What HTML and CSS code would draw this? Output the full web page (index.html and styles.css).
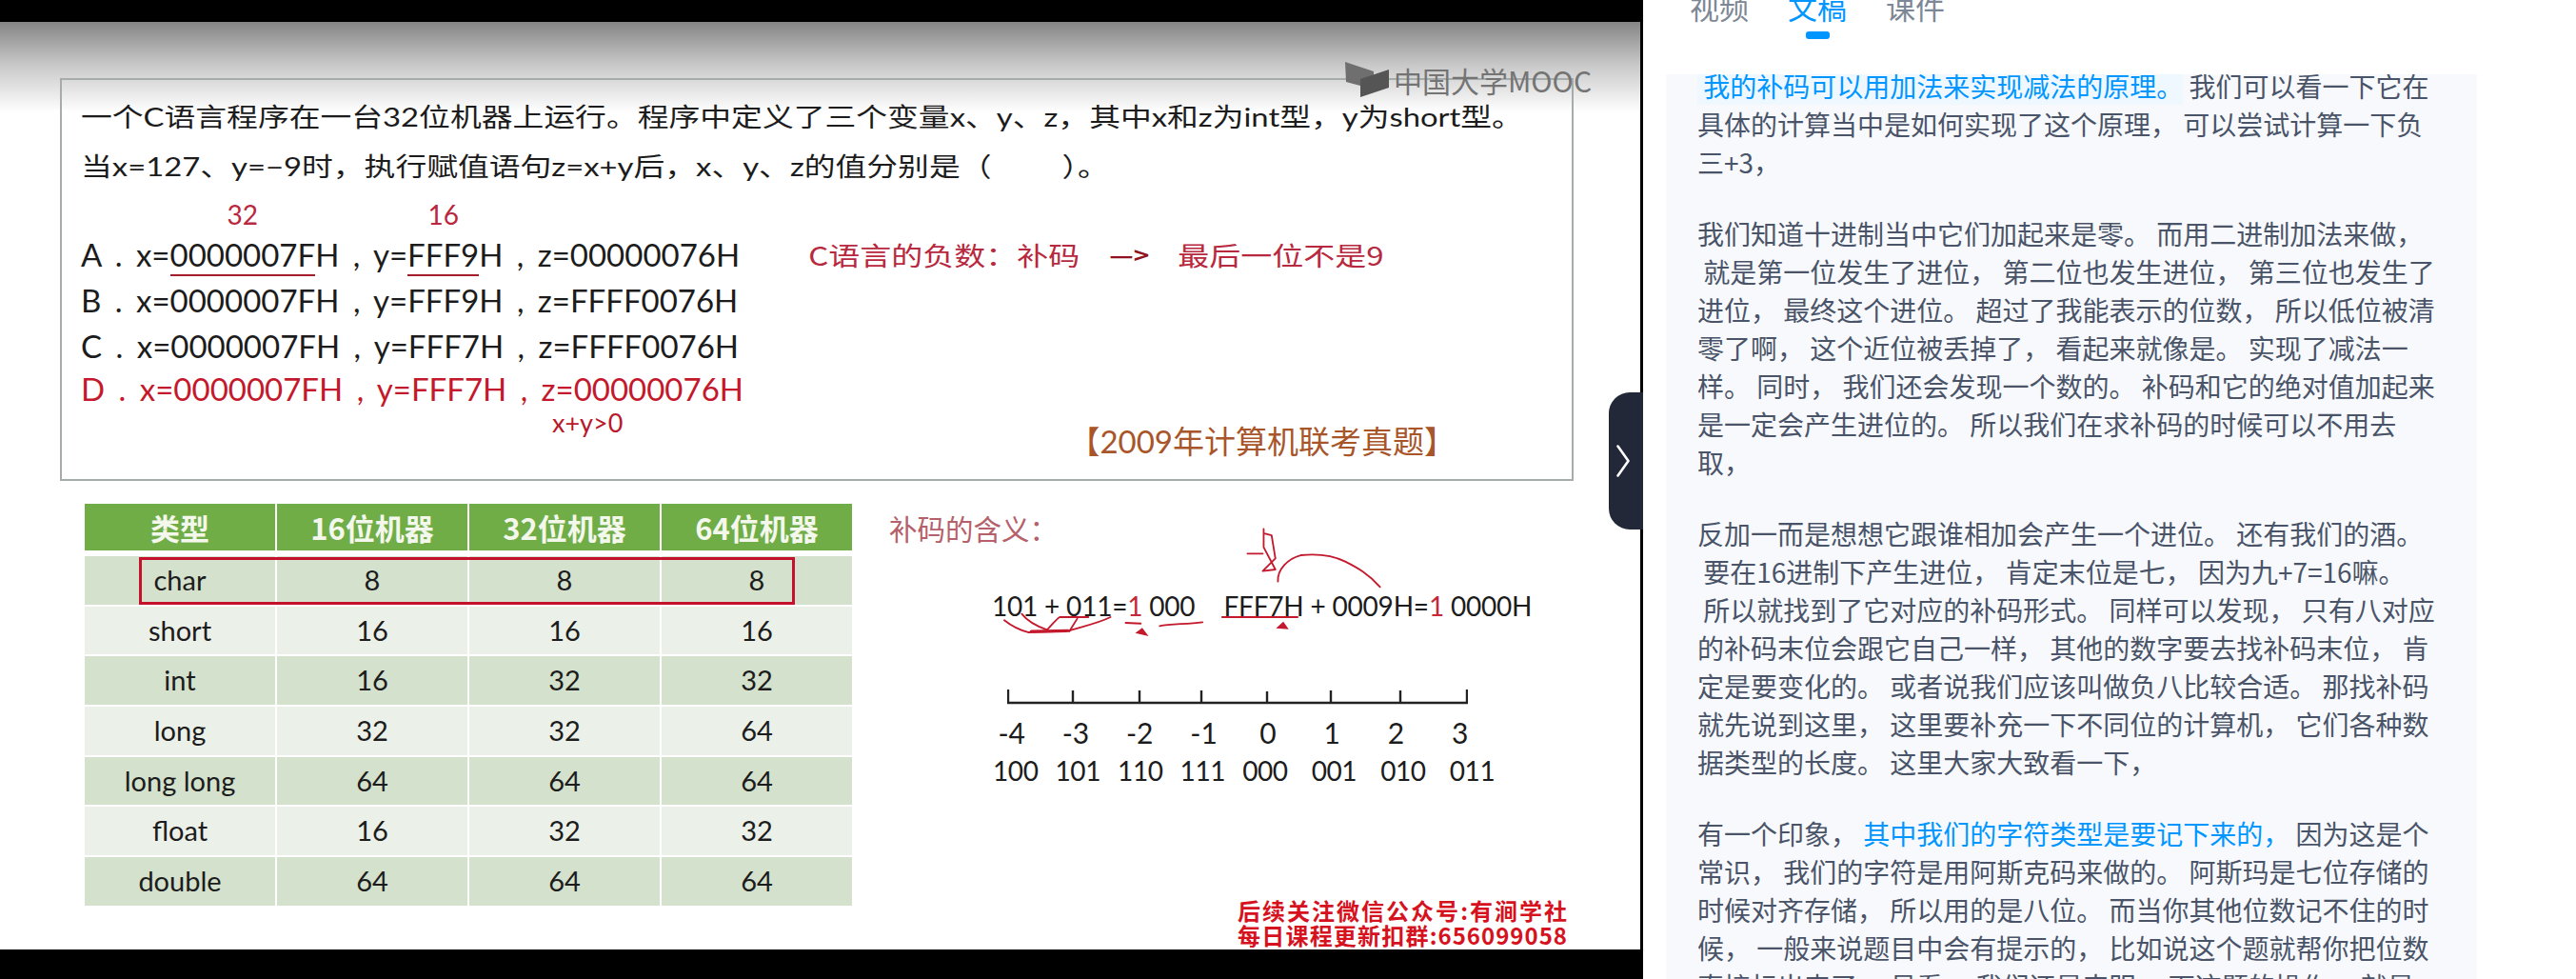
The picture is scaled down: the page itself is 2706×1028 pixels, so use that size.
FILE: index.html
```html
<!DOCTYPE html>
<html lang="zh-CN">
<head>
  <meta charset="UTF-8" />
  <title>补码 - 文稿</title>
  <link rel="stylesheet" href="styles.css">
</head>
<body>
  <div class="video">
    <div class="slide">
      <div class="question">
        <div class="q-line">一个C语言程序在一台32位机器上运行。程序中定义了三个变量x、y、z，其中x和z为int型，y为short型。</div>
        <div class="q-line">当x=127、y=−9时，执行赋值语句z=x+y后，x、y、z的值分别是（　　 ）。</div>
        <div class="options">
          <div class="opt opt-a">
            <span>A . x=<span class="mark mark-x">0000007F<i>32</i></span>H , y=<span class="mark mark-y">FFF9<i>16</i></span>H , z=00000076H</span>
            <span class="note">C语言的负数：补码<b>—&gt;</b>最后一位不是9</span>
          </div>
          <div class="opt">B . x=0000007FH , y=FFF9H , z=FFFF0076H</div>
          <div class="opt">C . x=0000007FH , y=FFF7H , z=FFFF0076H</div>
          <div class="opt opt-right">D . x=0000007FH , y=FFF7H , z=00000076H<span class="hint">x+y&gt;0</span></div>
        </div>
        <div class="source">【2009年计算机联考真题】</div>
      </div>

      <div class="lower">
        <div class="sizes">
          <div class="th">类型</div><div class="th">16位机器</div><div class="th">32位机器</div><div class="th">64位机器</div>
          <div class="td dark">char</div><div class="td dark">8</div><div class="td dark">8</div><div class="td dark">8</div>
          <div class="td">short</div><div class="td">16</div><div class="td">16</div><div class="td">16</div>
          <div class="td dark">int</div><div class="td dark">16</div><div class="td dark">32</div><div class="td dark">32</div>
          <div class="td">long</div><div class="td">32</div><div class="td">32</div><div class="td">64</div>
          <div class="td dark">long long</div><div class="td dark">64</div><div class="td dark">64</div><div class="td dark">64</div>
          <div class="td">float</div><div class="td">16</div><div class="td">32</div><div class="td">32</div>
          <div class="td dark">double</div><div class="td dark">64</div><div class="td dark">64</div><div class="td dark">64</div>
          <div class="char-box"></div>
        </div>

        <div class="meaning">
          <div class="m-title">补码的含义：</div>
          <div class="equations">
            <span>101 + 011=<em>1</em> 000</span>
            <span>FFF7H + 0009H=<em>1</em> 0000H</span>
          </div>
          <!-- handwriting over the sums -->
          <svg class="scribble" viewBox="0 0 1300 390" xmlns="http://www.w3.org/2000/svg">
            <g fill="none" stroke="#c4182c" stroke-width="5.5" stroke-linecap="round" stroke-linejoin="round">
              <path d="M75 310 C100 330 120 340 150 348 L270 345 C320 330 370 320 410 300"/>
              <path d="M130 290 C150 315 180 330 210 340 C230 320 240 305 250 300 L340 300 M305 305 L280 345"/>
              <path d="M160 345 L275 343" stroke-width="9"/>
              <path d="M458 318 L505 320" stroke-width="6"/>
              <path d="M565 328 C600 322 650 322 700 316"/>
              <path d="M762 300 L1000 300"/>
              <path d="M842 100 L890 100 M893 22 L893 80 L930 150 L890 155 L930 115 L918 42 L895 36"/>
              <path d="M938 188 C935 150 970 115 1010 105 C1060 100 1110 105 1150 125 C1190 145 1225 165 1260 205"/>
            </g>
            <path d="M488 350 L510 334 L530 360 Z M932 335 L955 314 L972 338 Z" fill="#c4182c"/>
          </svg>
          <svg class="axis" viewBox="0 0 484 16" xmlns="http://www.w3.org/2000/svg">
            <path d="M1 0 V14 H483 V0 M69 1 V14 M139 1 V14 M204 1 V14 M273 2 V14 M340 1 V14 M413 1 V14" fill="none" stroke="#222" stroke-width="2.4"/>
          </svg>
          <div class="ticks">
            <span>-4</span><span>-3</span><span>-2</span><span>-1</span><span>0</span><span>1</span><span>2</span><span>3</span>
          </div>
          <div class="bins">
            <span>100</span><span>101</span><span>110</span><span>111</span><span>000</span><span>001</span><span>010</span><span>011</span>
          </div>
          <div class="promo">后续关注微信公众号:有涧学社<br>每日课程更新扣群:656099058</div>
        </div>
      </div>
    </div>

    <div class="watermark">
      <svg viewBox="0 0 46 37" xmlns="http://www.w3.org/2000/svg">
        <path d="M0 0 L30 10 L30 29 L16 25 L1 21 Z" fill="#6f6f6f"/>
        <path d="M16 18 L46 8 L46 27 L16 37 Z" fill="#555"/>
      </svg>
      <span>中国大学MOOC</span>
    </div>

    <div class="toggle">
      <svg viewBox="0 0 14 34" xmlns="http://www.w3.org/2000/svg">
        <path d="M1.5 1.5 L12.5 17 L1.5 32.5" fill="none" stroke="#fff" stroke-width="2.6" stroke-linecap="round" stroke-linejoin="round"/>
      </svg>
    </div>
  </div>

  <div class="side">
    <div class="tabs">
      <div class="tab">视频</div>
      <div class="tab active">文稿</div>
      <div class="tab">课件</div>
    </div>
    <div class="doc">
<p class="para first"><span class="hl"> 我的补码可以用加法来实现减法的原理。</span> 我们可以看一下它在
具体的计算当中是如何实现了这个原理， 可以尝试计算一下负
三+3，</p>
<p class="para">我们知道十进制当中它们加起来是零。 而用二进制加法来做，
 就是第一位发生了进位， 第二位也发生进位， 第三位也发生了
进位， 最终这个进位。 超过了我能表示的位数， 所以低位被清
零了啊， 这个近位被丢掉了， 看起来就像是。 实现了减法一
样。 同时， 我们还会发现一个数的。 补码和它的绝对值加起来
是一定会产生进位的。 所以我们在求补码的时候可以不用去
取，</p>
<p class="para">反加一而是想想它跟谁相加会产生一个进位。 还有我们的酒。
 要在16进制下产生进位， 肯定末位是七， 因为九+7=16嘛。
 所以就找到了它对应的补码形式。 同样可以发现， 只有八对应
的补码末位会跟它自己一样， 其他的数字要去找补码末位， 肯
定是要变化的。 或者说我们应该叫做负八比较合适。 那找补码
就先说到这里， 这里要补充一下不同位的计算机， 它们各种数
据类型的长度。 这里大家大致看一下，</p>
<p class="para">有一个印象， <span class="key">其中我们的字符类型是要记下来的，</span> 因为这是个
常识， 我们的字符是用阿斯克码来做的。 阿斯玛是七位存储的
时候对齐存储， 所以用的是八位。 而当你其他位数记不住的时
候， 一般来说题目中会有提示的， 比如说这个题就帮你把位数
直接标出来了。 易看， 我们还是来明， 下这题的操作， 就是</p>
    </div>
  </div>
</body>
</html>
```

FILE: styles.css
```css
* {
  box-sizing: border-box;
}
html, body {
  height: 100%;
}
body {
  margin: 0;
  display: flex;
  height: 1028px;
  overflow: hidden;
  background: #fff;
  font-family: Lato, "Noto Sans CJK SC", sans-serif;
}

/* Video side */
.video {
  position: relative;
  flex: none;
  width: 1726px;
  height: 1028px;
  padding: 23px 3px 31px 0;
  background: #000;
}
.slide {
  height: 974px;
  padding: 59px 0 0 63px;
  background: linear-gradient(#858585, #c8c8c8 45px, #fff 95px);
  color: #1c1c1c;
}
.question {
  position: relative;
  display: flex;
  flex-direction: column;
  width: 1590px;
  height: 423px;
  padding: 13px 0 0 20px;
  border: 2px solid #a6acab;
}
.q-line {
  height: 52px;
  font-size: 32.8px;
  line-height: 52px;
  white-space: nowrap;
  transform: scaleY(.84);
}
.options {
  margin-top: 42px;
}
.opt {
  height: 48px;
  font-size: 33px;
  line-height: 48px;
  word-spacing: 6px;
  white-space: pre;
}
.opt-a {
  display: flex;
  gap: 72px;
}
.opt-right {
  margin-top: -3px;
  color: #c4182c;
}
.mark {
  position: relative;
}
.mark::after {
  content: "";
  position: absolute;
  left: 0;
  right: 0;
  bottom: -3px;
  height: 2px;
  background: #a51d2d;
}
.mark i {
  position: absolute;
  left: 50%;
  top: -39px;
  transform: translateX(-50%);
  font-style: normal;
  font-size: 28px;
  line-height: 34px;
  color: #b8283e;
}
.note {
  display: flex;
  font-family: "Noto Sans CJK SC", sans-serif;
  font-size: 33px;
  word-spacing: 0;
  color: #b8283e;
  transform: scaleY(.84);
}
.note b {
  margin: 0 30px 0 31px;
  font-size: 28px;
  color: #8f1322;
}
.hint {
  position: absolute;
  left: 515px;
  top: 345px;
  font-size: 27px;
  line-height: 30px;
  word-spacing: 0;
  color: #b8182c;
}
.source {
  margin-top: auto;
  padding: 0 122px 18px 0;
  text-align: right;
  font-size: 33px;
  line-height: 44px;
  color: #a8552a;
}

.lower {
  display: flex;
  gap: 39px;
  margin: 24px 0 0 26px;
}

/* Types table */
.sizes {
  position: relative;
  flex: none;
  display: grid;
  grid-template-columns: repeat(4, 200px);
  grid-template-rows: 53px repeat(7, 50.7px);
  gap: 2px;
  width: 806px;
  height: 422px;
}
.th {
  height: 49px;
  background: #70ad47;
  color: #f3f7ec;
  font-family: "Noto Sans CJK SC", sans-serif;
  font-size: 31px;
  font-weight: 700;
  line-height: 49px;
  text-align: center;
}
.td {
  background: #ebf0e8;
  font-size: 29px;
  line-height: 50px;
  text-align: center;
}
.td.dark {
  background: #d4e1cd;
}
.char-box {
  position: absolute;
  left: 57px;
  top: 56px;
  width: 689px;
  height: 50px;
  border: 3px solid #c4122c;
}

/* Right half of the slide */
.meaning {
  position: relative;
  width: 700px;
}
.m-title {
  height: 50px;
  font-family: "Noto Sans CJK SC", sans-serif;
  font-size: 29.5px;
  line-height: 50px;
  color: #b5606a;
}
.equations {
  display: flex;
  gap: 30px;
  margin: 32px 0 0 108px;
  font-size: 28px;
  line-height: 50px;
  letter-spacing: -.2px;
  white-space: pre;
}
.equations em {
  font-style: normal;
  color: #c4283a;
}
.scribble {
  position: absolute;
  left: 96px;
  top: 19px;
  width: 433px;
  height: 130px;
}
.axis {
  display: block;
  width: 484px;
  height: 16px;
  margin: 63px 0 0 124px;
}
.ticks {
  display: grid;
  grid-template-columns: repeat(8, 67.3px);
  margin: 9px 0 0 95px;
  font-size: 30px;
  line-height: 40px;
  text-align: center;
}
.bins {
  display: flex;
  gap: 18px;
  margin-left: 109px;
  font-size: 28px;
  line-height: 40px;
  letter-spacing: -.4px;
}
.bins span:nth-child(n+6) {
  margin-left: 7px;
}
.promo {
  width: 347px;
  margin: 114px 0 0 366px;
  font-family: "Noto Sans CJK SC", sans-serif;
  font-size: 24px;
  font-weight: 700;
  line-height: 26px;
  letter-spacing: 1px;
  color: #d5121e;
  text-align: justify;
  text-align-last: justify;
  white-space: nowrap;
}

.watermark {
  position: absolute;
  left: 1413px;
  top: 65px;
  display: flex;
  align-items: center;
  gap: 5px;
  height: 37px;
  font-family: "Noto Sans CJK SC", sans-serif;
  font-size: 30px;
  color: #747474;
  white-space: nowrap;
}
.watermark svg {
  width: 46px;
  height: 37px;
}
.toggle {
  position: absolute;
  left: 1690px;
  top: 412px;
  display: flex;
  align-items: center;
  justify-content: center;
  width: 36px;
  height: 144px;
  padding-right: 6px;
  background: #222838;
  border-radius: 22px 0 0 22px;
}
.toggle svg {
  width: 14px;
  height: 34px;
}

/* Transcript side */
.side {
  flex: 1;
  min-width: 0;
  height: 1028px;
  font-family: "Noto Sans CJK SC", sans-serif;
}
.tabs {
  display: flex;
  gap: 41px;
  height: 91px;
  padding-left: 49px;
  margin-top: -13px;
}
.tab {
  font-size: 31px;
  line-height: 40px;
  color: #7d8795;
}
.tab.active {
  color: #0096ff;
}
.tab.active::after {
  content: "";
  display: block;
  width: 25px;
  height: 8px;
  margin: 6px auto 0;
  background: #0096ff;
  border-radius: 3px;
}
.doc {
  width: 852px;
  height: 950px;
  margin-left: 24px;
  padding-left: 33px;
  overflow: hidden;
  background: #f7f9fd;
  font-size: 28px;
  line-height: 40px;
  color: #4a5468;
}
.para {
  margin: 0 0 35px;
  white-space: pre;
}
.para.first {
  margin-top: -8px;
}
.hl {
  background: #eff8ff;
  color: #0096ff;
}
.key {
  color: #0096ff;
}
```
